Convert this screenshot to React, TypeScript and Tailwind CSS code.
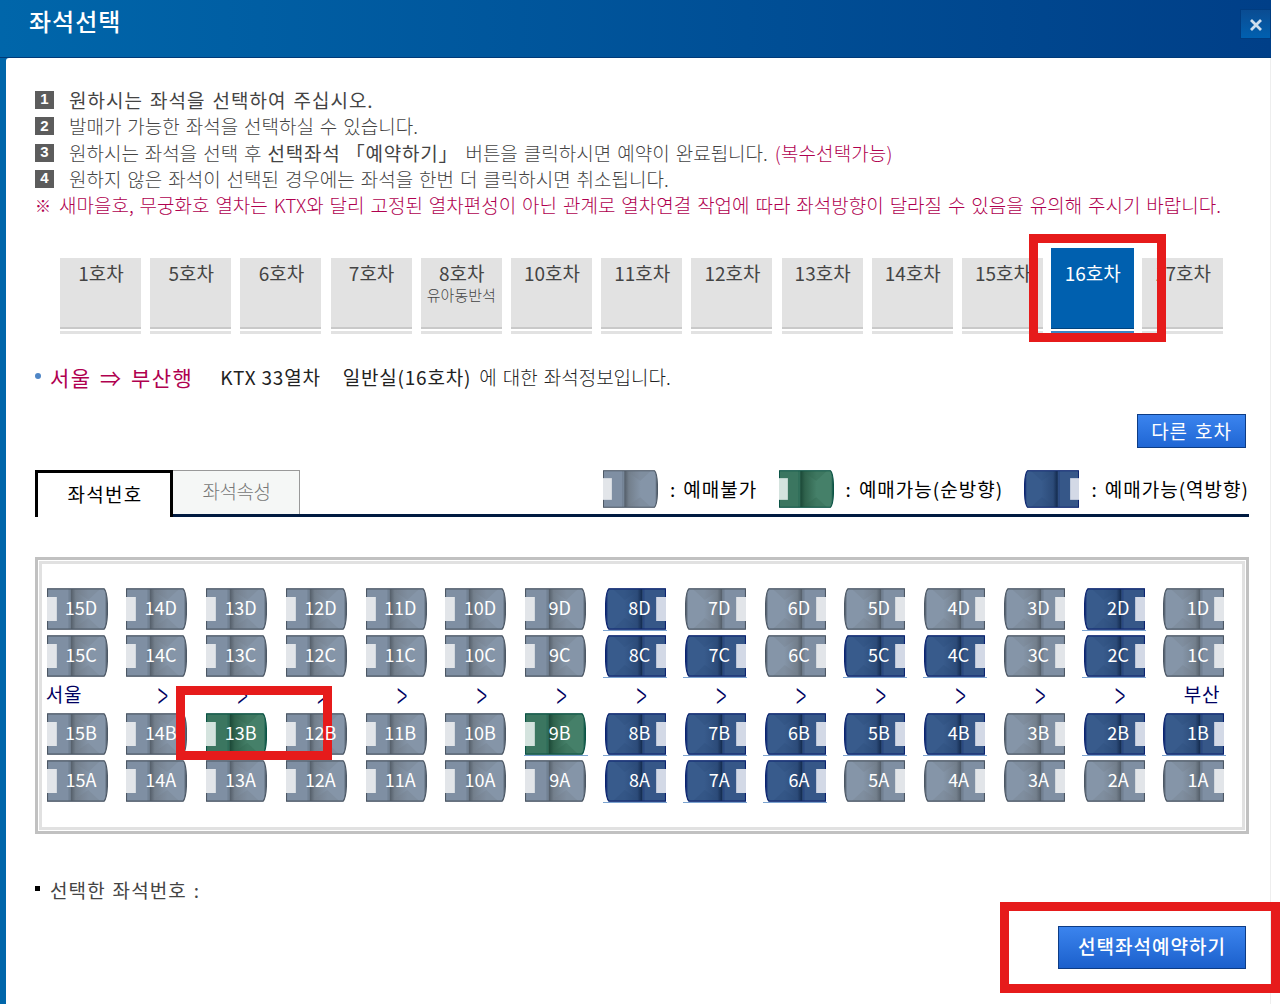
import type { ReactNode } from 'react';

type SeatState = 'sold' | 'forward' | 'backward';

const COLUMNS = [15, 14, 13, 12, 11, 10, 9, 8, 7, 6, 5, 4, 3, 2, 1];

const BACKWARD_OPEN = [
  '8D', '2D',
  '8C', '7C', '5C', '4C', '2C',
  '8B', '7B', '6B', '5B', '4B', '2B', '1B',
  '8A', '7A', '6A',
];
const FORWARD_OPEN = ['13B', '9B'];

const CARS = [
  { name: '1호차' },
  { name: '5호차' },
  { name: '6호차' },
  { name: '7호차' },
  { name: '8호차', note: '유아동반석' },
  { name: '10호차' },
  { name: '11호차' },
  { name: '12호차' },
  { name: '13호차' },
  { name: '14호차' },
  { name: '15호차' },
  { name: '16호차', active: true },
  { name: '17호차' },
];

const seatColors = {
  sold: { edge: '#4d5865', back: '#7f8fa3', seat: '#8595a8', shade: '#737f8c', head: '#e2e5e9', fold: '#525c67' },
  forward: { edge: '#0b5345', back: '#3b7660', seat: '#458069', shade: '#2f624c', head: '#d4e3de', fold: '#1a4736' },
  backward: { edge: '#0c2470', back: '#365788', seat: '#385b8c', shade: '#2c4b79', head: '#d3d9e6', fold: '#12294c' },
};

interface SeatIconProps {
  state: SeatState;
  flipped?: boolean;
  className?: string;
}

const SeatIcon = ({ state, flipped, className }: SeatIconProps) => {
  const c = seatColors[state];
  const id = `seat-${state}`;
  return (
    <svg viewBox="0 0 62 42" preserveAspectRatio="none" className={className}>
      <defs>
        <linearGradient id={id} x1="0" x2="1" y1="0" y2="0">
          <stop offset="0" stopColor={c.fold} />
          <stop offset="0.14" stopColor={c.shade} />
          <stop offset="0.5" stopColor={c.seat} />
          <stop offset="0.94" stopColor={c.seat} />
          <stop offset="1" stopColor={c.edge} />
        </linearGradient>
      </defs>
      <g transform={flipped ? 'translate(62 0) scale(-1 1)' : undefined}>
        <path d="M0.5 0.5H58Q61.5 4 61.5 21T58 41.5H0.5Z" fill={c.back} />
        <path d="M24 1H58Q61 4 61 21T58 41H24Z" fill={`url(#${id})`} />
        <path d="M26 1H54L42 12ZM26 41H54L42 30Z" fill={c.shade} fillOpacity="0.3" />
        <path d="M22.5 1V41" stroke={c.edge} strokeOpacity="0.4" />
        <path d="M0.5 0.8H58Q61.5 4 61.5 21T58 41.2H0.5Z" fill="none" stroke={c.edge} strokeWidth="1.2" />
        <path d="M0 9H10V33H0Z" fill={c.head} />
      </g>
    </svg>
  );
};

const Seat = ({ col, row }: { col: number; row: string }) => {
  const label = `${col}${row}`;
  const state: SeatState = FORWARD_OPEN.includes(label)
    ? 'forward'
    : BACKWARD_OPEN.includes(label)
      ? 'backward'
      : 'sold';
  return (
    <div className="grid h-[43px] w-[62px] place-items-center">
      <SeatIcon state={state} flipped={col < 9} className="col-start-1 row-start-1 h-[42px] w-[61px] self-start" />
      <span className="relative z-10 col-start-1 row-start-1 pl-[8px] pb-[6px] text-[18px] leading-none text-white">
        {label}
      </span>
      {state !== 'sold' && (
        <i className="col-start-1 row-start-1 -mx-px h-px w-[64px] self-end bg-[#7ba3d0]" />
      )}
    </div>
  );
};

const SeatRow = ({ row }: { row: string }) => (
  <div className="flex justify-between">
    {COLUMNS.map((col) => (
      <Seat key={col} col={col} row={row} />
    ))}
  </div>
);

const Step = ({ no, children }: { no: number; children: ReactNode }) => (
  <li className="flex h-[26.3px] items-center whitespace-nowrap">
    <span className="mr-[15px] flex h-[18px] w-[19px] items-center justify-center bg-[#5c5c5c] pb-px font-['Liberation_Sans'] text-[15px] font-bold text-white">
      {no}
    </span>
    {children}
  </li>
);

const Legend = ({ state, flipped, children }: SeatIconProps & { children: ReactNode }) => (
  <div className="flex items-center whitespace-nowrap text-[19px] tracking-[1px] text-black">
    <SeatIcon state={state} flipped={flipped} className="mr-[12px] h-[38px] w-[55px]" />
    <span className="mr-[7px]">:</span>
    {children}
  </div>
);

const App = () => {
  return (
    <div className="relative h-[1004px] w-[1280px] overflow-hidden bg-white font-['Noto_Sans_CJK_KR',sans-serif] text-[#444]">
      <div className="flex h-full w-[1271px] flex-col bg-[#0066aa]">
        <header className="flex h-[58px] shrink-0 justify-between border-b border-[#003a78] bg-linear-to-r from-[#0066aa] to-[#003f88]">
          <h1 className="ml-[29px] mt-[4px] text-[24px] leading-[34px] font-medium tracking-[1px] text-white">
            좌석선택
          </h1>
          <button
            aria-label="닫기"
            className="mt-[9px] flex h-[30px] w-[31px] items-center justify-center border border-[#003c80] bg-linear-to-b from-[#0a4c92] to-[#0060b0]"
          >
            <svg viewBox="0 0 12 12" className="mt-[2px] h-[12px] w-[12px]">
              <path d="M1 1L11 11M11 1L1 11" stroke="#cfdeee" strokeWidth="2.8" />
            </svg>
          </button>
        </header>

        <main className="ml-[6px] flex-1 rounded-tl-[3px] border-r border-[#eeeeee] bg-white pl-[29px] pt-[29px]">
          <ul className="text-[19px]">
            <Step no={1}>
              <span className="tracking-[1px] [word-spacing:1.8px]">원하시는 좌석을 선택하여 주십시오.</span>
            </Step>
            <Step no={2}>
              <span className="font-light [word-spacing:1.7px]">발매가 가능한 좌석을 선택하실 수 있습니다.</span>
            </Step>
            <Step no={3}>
              <span className="font-light [word-spacing:1.7px]">원하시는 좌석을 선택 후</span>
              <span className="ml-[6px] tracking-[0.8px]">선택좌석 「예약하기」</span>
              <span className="ml-[7px] font-light [word-spacing:1.8px]">버튼을 클릭하시면 예약이 완료됩니다.</span>
              <span className="ml-[7px] font-light tracking-[0.1px] text-[#b0004f]">(복수선택가능)</span>
            </Step>
            <Step no={4}>
              <span className="font-light [word-spacing:1.7px]">
                원하지 않은 좌석이 선택된 경우에는 좌석을 한번 더 클릭하시면 취소됩니다.
              </span>
            </Step>
            <li className="flex h-[26.3px] items-center whitespace-nowrap text-[#b0004f]">
              <span className="w-[24px] text-[16px] font-bold">※</span>
              <span className="font-light [word-spacing:1.7px]">
                새마을호, 무궁화호 열차는 KTX와 달리 고정된 열차편성이 아닌 관계로 열차연결 작업에 따라 좌석방향이 달라질 수 있음을 유의해 주시기 바랍니다.
              </span>
            </li>
          </ul>

          <div className="ml-[25px] mt-[30px] flex h-[86px] w-[1163px] items-end justify-between">
            {CARS.map((car) =>
              car.active ? (
                <div key={car.name} className="-mr-[1.5px] -ml-[1px] flex w-[83px] flex-col">
                  <div className="flex h-[81px] justify-center border-b border-[#00437e] bg-[#0060af] pt-[12px] text-[19px] leading-[26px] text-white">
                    {car.name}
                  </div>
                  <i className="mt-[2px] mb-px h-[2px] bg-[#3b86c4]" />
                </div>
              ) : (
                <div key={car.name} className="flex w-[81px] flex-col">
                  <div className="flex h-[71px] flex-col items-center border-b-2 border-[#c9c9c9] bg-[#e2e2e2] pt-[2px] text-[19px] leading-[26px]">
                    <span className="pl-px">{car.name}</span>
                    {car.note && (
                      <span className="text-[15px] leading-[18px] font-light">{car.note}</span>
                    )}
                  </div>
                  <i className="mt-[2px] h-[3px] bg-[#e2e2e2]" />
                </div>
              ),
            )}
          </div>

          <p className="mt-[28px] flex h-[30px] items-center whitespace-nowrap text-[19px] text-[#222]">
            <i className="mr-[9px] mb-[3px] h-[6px] w-[6px] rounded-full bg-[#4f86c6]" />
            <span className="text-[21px] tracking-[1.4px] text-[#b0004f] [word-spacing:2.5px]">서울 ⇒ 부산행</span>
            <span className="ml-[27px] tracking-[0.8px]">KTX 33열차</span>
            <span className="ml-[22px] tracking-[0.8px]">일반실(16호차)</span>
            <span className="ml-[8px] font-light [word-spacing:1.8px]">에 대한 좌석정보입니다.</span>
          </p>

          <div className="mt-[22px] flex w-[1211px] justify-end">
            <button className="h-[34px] w-[109px] border border-[#0d3c85] bg-linear-to-b from-[#3b84ee] to-[#1f66d4] text-[19px] leading-[28px] tracking-[0.9px] text-white [word-spacing:2px]">
              다른 호차
            </button>
          </div>

          <div className="mt-[22px] flex h-[47px] w-[1214px]">
            <div className="flex w-[138px] items-center justify-center border-3 border-b-0 border-black pb-[3px] pl-[2px] text-[19px] tracking-[1.3px] text-black">
              좌석번호
            </div>
            <div className="flex flex-1 justify-between border-b-3 border-[#001a40]">
              <div className="flex w-[127px] items-center justify-center border border-b-0 border-l-0 border-[#999] bg-[#f5f7f6] pb-[4px] pl-px text-[19px] font-light tracking-[-0.5px] text-[#777]">
                좌석속성
              </div>
              <div className="flex h-[38px] w-[646px] justify-between">
                <Legend state="sold">예매불가</Legend>
                <Legend state="forward">예매가능(순방향)</Legend>
                <Legend state="backward" flipped>예매가능(역방향)</Legend>
              </div>
            </div>
          </div>

          <section className="mt-[40px] h-[277px] w-[1214px] border-3 border-[#c1c1c1] p-px">
            <div className="flex h-full flex-col border-3 border-[#e1e1e1] pl-[4px] pr-[17px] pt-[24px]">
              <SeatRow row="D" />
              <div className="mt-[4px]">
                <SeatRow row="C" />
              </div>
              <div className="flex h-[35px] items-center justify-between pb-[3px] text-[19px] text-[#00005f]">
                {COLUMNS.map((col) => (
                  <div key={col} className="flex w-[62px] justify-center whitespace-nowrap">
                    {col === 15 && <span className="-ml-[26px] tracking-[0.8px]">서울</span>}
                    {col === 1 && <span className="ml-[16px] tracking-[0.8px]">부산</span>}
                    {col !== 15 && col !== 1 && (
                      <span className="ml-[12px] inline-block scale-y-200 font-light">&gt;</span>
                    )}
                  </div>
                ))}
              </div>
              <SeatRow row="B" />
              <div className="mt-[4px]">
                <SeatRow row="A" />
              </div>
            </div>
          </section>

          <p className="mt-[41px] flex h-[30px] items-center text-[19px] tracking-[1.1px] [word-spacing:1.5px]">
            <i className="mr-[10px] mb-[3px] h-[5px] w-[5px] bg-black" />
            선택한 좌석번호 :
          </p>

          <div className="mt-[21px] flex w-[1211px] justify-end">
            <button className="h-[43px] w-[188px] border border-[#0d3c85] bg-linear-to-b from-[#3b84ee] to-[#1b60cc] pb-[3px] text-[19px] leading-[34px] font-medium tracking-[1px] text-white">
              선택좌석예약하기
            </button>
          </div>
        </main>
      </div>

      {/* markers for the car, the seat and the booking button */}
      <i className="absolute left-[1029px] top-[234px] h-[108px] w-[137px] border-9 border-[#e61b1b]" />
      <i className="absolute left-[176px] top-[686px] h-[74px] w-[156px] border-9 border-[#e61b1b]" />
      <i className="absolute left-[1000px] top-[902px] h-[91px] w-[280px] border-9 border-[#e61b1b]" />
    </div>
  );
};

export default App;
